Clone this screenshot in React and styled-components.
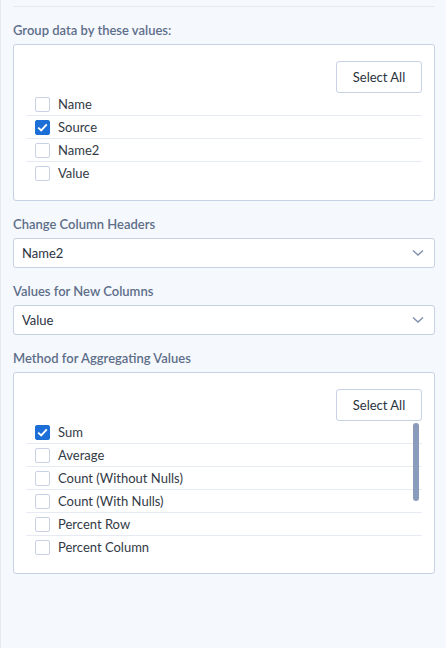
import React, { useState, useRef, useEffect } from "react";
import styled, { createGlobalStyle } from "styled-components";

const Global = createGlobalStyle`
  html, body { margin: 0; padding: 0; background: #f5f8fd; }
  body { font-family: "Segoe UI", "Lato", "Noto Sans", sans-serif; }
  * { box-sizing: border-box; }
`;

const Panel = styled.div`
  width: 446px;
  height: 648px;
  background: #f5f8fd;
  border-left: 1px solid #e4e9f2;
  padding: 6px 11px 0 12px;
  display: flex;
  flex-direction: column;
  overflow: hidden;
`;

const Divider = styled.div`
  height: 1px;
  background: #e5eaf2;
  margin-bottom: 15px;
`;

const Label = styled.div`
  font-size: 13px;
  font-weight: 600;
  color: #5e6e89;
  line-height: 16px;
  margin-bottom: 6px;
`;

const Section = styled.div`
  margin-bottom: ${(p) => p.$mb ?? 16}px;
`;

const Box = styled.div`
  background: #fff;
  border: 1px solid #c6d1e4;
  border-radius: 3px;
  padding: 16px 12px ${(p) => p.$pb || 16}px 12px;
  display: flex;
  flex-direction: column;
`;

const ButtonRow = styled.div`
  display: flex;
  justify-content: flex-end;
`;

const Button = styled.button`
  font-family: inherit;
  height: 32px;
  width: 86px;
  background: #fff;
  border: 1px solid #c6d1e4;
  border-radius: 3px;
  font-size: 13px;
  color: #2b3240;
  cursor: pointer;
`;

const ListWrap = styled.div`
  position: relative;
`;

const List = styled.div`
  display: flex;
  flex-direction: column;
  max-height: ${(p) => (p.$max ? `${p.$max}px` : "none")};
  overflow-y: ${(p) => (p.$max ? "auto" : "visible")};
  scrollbar-width: none;
  &::-webkit-scrollbar { display: none; }
`;

const Thumb = styled.div`
  position: absolute;
  right: 3px;
  width: 6px;
  border-radius: 3px;
  background: #8b9bbb;
  pointer-events: none;
`;

const Row = styled.label`
  display: flex;
  align-items: center;
  height: 23px;
  flex-shrink: 0;
  padding-left: 9px;
  border-bottom: 1px solid ${(p) => (p.$last ? "transparent" : "#e6eaf2")};
  font-size: 13px;
  color: #333a46;
  cursor: pointer;
`;

const Check = styled.span`
  width: 15px;
  height: 15px;
  border-radius: 2px;
  margin-right: 8px;
  display: inline-flex;
  align-items: center;
  justify-content: center;
  border: 1px solid ${(p) => (p.$on ? "#1b6fd6" : "#c8d2e4")};
  background: ${(p) => (p.$on ? "#1b6fd6" : "#fff")};
`;

const Select = styled.div`
  height: 30px;
  background: #fff;
  border: 1px solid #c6d1e4;
  border-radius: 3px;
  display: flex;
  align-items: center;
  justify-content: space-between;
  padding: 0 10px 0 8px;
  font-size: 13px;
  color: #2b3240;
`;

const Tick = () => (
  <svg width="11" height="9" viewBox="0 0 11 9">
    <path d="M1.2 4.6 L4.2 7.4 L9.8 1.4" fill="none" stroke="#fff" strokeWidth="1.9" />
  </svg>
);

const Chevron = () => (
  <svg width="12" height="8" viewBox="0 0 12 8">
    <path d="M1 1.5 L6 6 L11 1.5" fill="none" stroke="#7f8fae" strokeWidth="1.4" />
  </svg>
);

function CheckList({ items, initial, max }) {
  const [sel, setSel] = useState(initial);
  const ref = useRef(null);
  const [bar, setBar] = useState(null);

  const update = () => {
    const el = ref.current;
    if (!el || !max) return;
    const { scrollHeight, clientHeight, scrollTop } = el;
    if (scrollHeight <= clientHeight) return setBar(null);
    const h = Math.round((clientHeight * clientHeight) / scrollHeight) - 4;
    const top = 2 + (scrollTop / (scrollHeight - clientHeight)) * (clientHeight - h - 4);
    setBar({ h, top });
  };

  useEffect(update, [max, items.length]);

  return (
    <ListWrap>
      <List $max={max} ref={ref} onScroll={update}>
        {items.map((it, i) => (
          <Row
            key={it}
            $last={!max && i === items.length - 1}
            onClick={() => setSel((s) => ({ ...s, [it]: !s[it] }))}
          >
            <Check $on={!!sel[it]}>{sel[it] && <Tick />}</Check>
            {it}
          </Row>
        ))}
      </List>
      {bar && <Thumb style={{ top: bar.top, height: bar.h }} />}
    </ListWrap>
  );
}

export default function App() {
  return (
    <>
      <Global />
      <Panel>
        <Divider />
        <Section $mb={15}>
          <Label>Group data by these values:</Label>
          <Box $pb={15}>
            <ButtonRow>
              <Button>Select All</Button>
            </ButtonRow>
            <CheckList items={["Name", "Source", "Name2", "Value"]} initial={{ Source: true }} />
          </Box>
        </Section>
        <Section $mb={15}>
          <Label>Change Column Headers</Label>
          <Select>
            Name2
            <Chevron />
          </Select>
        </Section>
        <Section $mb={15}>
          <Label>Values for New Columns</Label>
          <Select>
            Value
            <Chevron />
          </Select>
        </Section>
        <Section>
          <Label>Method for Aggregating Values</Label>
          <Box $pb={15}>
            <ButtonRow>
              <Button>Select All</Button>
            </ButtonRow>
            <CheckList
              max={137}
              initial={{ Sum: true }}
              items={[
                "Sum",
                "Average",
                "Count (Without Nulls)",
                "Count (With Nulls)",
                "Percent Row",
                "Percent Column",
                "Percent Total",
                "Minimum",
                "Maximum",
                "Median",
              ]}
            />
          </Box>
        </Section>
      </Panel>
    </>
  );
}
